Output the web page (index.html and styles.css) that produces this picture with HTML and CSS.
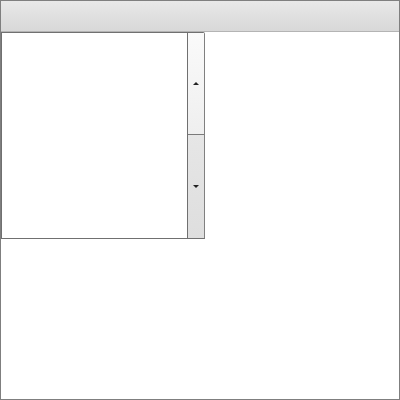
FILE: index.html
```html
<!DOCTYPE html>
<html>
<head>
<meta charset="utf-8">
<link rel="stylesheet" href="styles.css">
</head>
<body>
<div class="frame">
  <div class="header"></div>
  <div class="spinbox">
    <div class="field"></div>
    <div class="spinner">
      <div class="btn up"><span class="arrow-up"></span></div>
      <div class="btn down"><span class="arrow-down"></span></div>
    </div>
  </div>
</div>
</body>
</html>
```
FILE: styles.css
```css
html, body {
  margin: 0;
  padding: 0;
  background: #ffffff;
  font-family: "Liberation Sans", Arial, sans-serif;
}
.frame {
  width: 400px;
  height: 400px;
  box-sizing: border-box;
  border: 1px solid #7f7f7f;
  background: #ffffff;
}
.header {
  height: 30px;
  border-bottom: 1px solid #b4b4b4;
  background: linear-gradient(#e8e8e8, #d8d8d8);
}
.spinbox {
  width: 204px;
  height: 207px;
  box-sizing: border-box;
  border: 1px solid #707070;
  border-right-color: #808080;
  border-top-right-radius: 2px;
  display: flex;
  background: #ffffff;
}
.field {
  flex: 1;
  background: #ffffff;
}
.spinner {
  width: 16px;
  border-left: 1px solid #707070;
  display: flex;
  flex-direction: column;
}
.btn {
  display: flex;
  align-items: center;
  justify-content: center;
}
.up {
  height: 101px;
  border-bottom: 1px solid #7a7a7a;
  background: linear-gradient(#fafafa, #efefef);
}
.down {
  flex: 1;
  background: linear-gradient(#e6e6e6, #dedede);
}
.arrow-up {
  width: 0;
  height: 0;
  border-left: 3px solid transparent;
  border-right: 3px solid transparent;
  border-bottom: 3px solid #222;
}
.arrow-down {
  width: 0;
  height: 0;
  border-left: 3px solid transparent;
  border-right: 3px solid transparent;
  border-top: 3px solid #222;
}
```
